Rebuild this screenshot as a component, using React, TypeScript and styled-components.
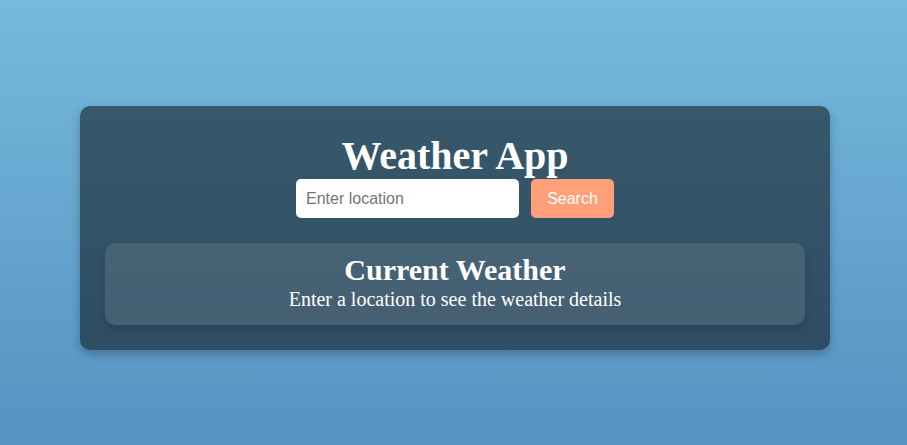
import React from "react";
import styled, { createGlobalStyle } from "styled-components";

const GlobalStyle = createGlobalStyle`
  html, body {
    margin: 0;
    padding: 0;
  }
  body {
    font-family: "Liberation Serif", "Times New Roman", serif;
    background: linear-gradient(to bottom, #76bade, #5792c0);
    min-height: 100vh;
    color: #ffffff;
  }
`;

const Page = styled.main`
  min-height: 100vh;
  box-sizing: border-box;
  padding: 11px 0 0 3px;
  display: flex;
  align-items: center;
  justify-content: center;
`;

const Card = styled.section`
  width: 750px;
  box-sizing: border-box;
  padding: 26px 25px 25px;
  background: rgba(0, 0, 0, 0.5);
  border-radius: 10px;
  box-shadow: 0 4px 10px rgba(0, 0, 0, 0.25);
  text-align: center;
`;

const Title = styled.h1`
  margin: 0;
  font-size: 40px;
  font-weight: bold;
  line-height: normal;
`;

const SearchRow = styled.form`
  display: flex;
  justify-content: center;
  gap: 12px;
`;

const Input = styled.input`
  width: 223px;
  height: 39px;
  box-sizing: border-box;
  padding: 0 10px;
  border: none;
  border-radius: 5px;
  background: #ffffff;
  font-family: "Liberation Sans", Arial, sans-serif;
  font-size: 16px;
  color: #333;
  outline: none;
  &::placeholder {
    color: #757575;
  }
`;

const Button = styled.button`
  width: 83px;
  height: 39px;
  padding: 0;
  border: none;
  border-radius: 5px;
  background: #ffa07a;
  color: #ffffff;
  font-family: "Liberation Sans", Arial, sans-serif;
  font-size: 16px;
  cursor: pointer;
`;

const Panel = styled.div`
  margin-top: 25px;
  padding: 10px 20px 14px;
  background: rgba(255, 255, 255, 0.1);
  border-radius: 10px;
  box-shadow: 0 4px 8px rgba(0, 0, 0, 0.15);
`;

const PanelTitle = styled.h2`
  margin: 0 0 1px;
  font-size: 30px;
  font-weight: bold;
  line-height: normal;
`;

const PanelText = styled.p`
  margin: 0;
  font-size: 20px;
  line-height: normal;
`;

export default function App() {
  return (
    <>
      <GlobalStyle />
      <Page>
        <Card>
          <Title>Weather App</Title>
          <SearchRow onSubmit={(e) => e.preventDefault()}>
            <Input type="text" placeholder="Enter location" />
            <Button type="submit">Search</Button>
          </SearchRow>
          <Panel>
            <PanelTitle>Current Weather</PanelTitle>
            <PanelText>Enter a location to see the weather details</PanelText>
          </Panel>
        </Card>
      </Page>
    </>
  );
}
